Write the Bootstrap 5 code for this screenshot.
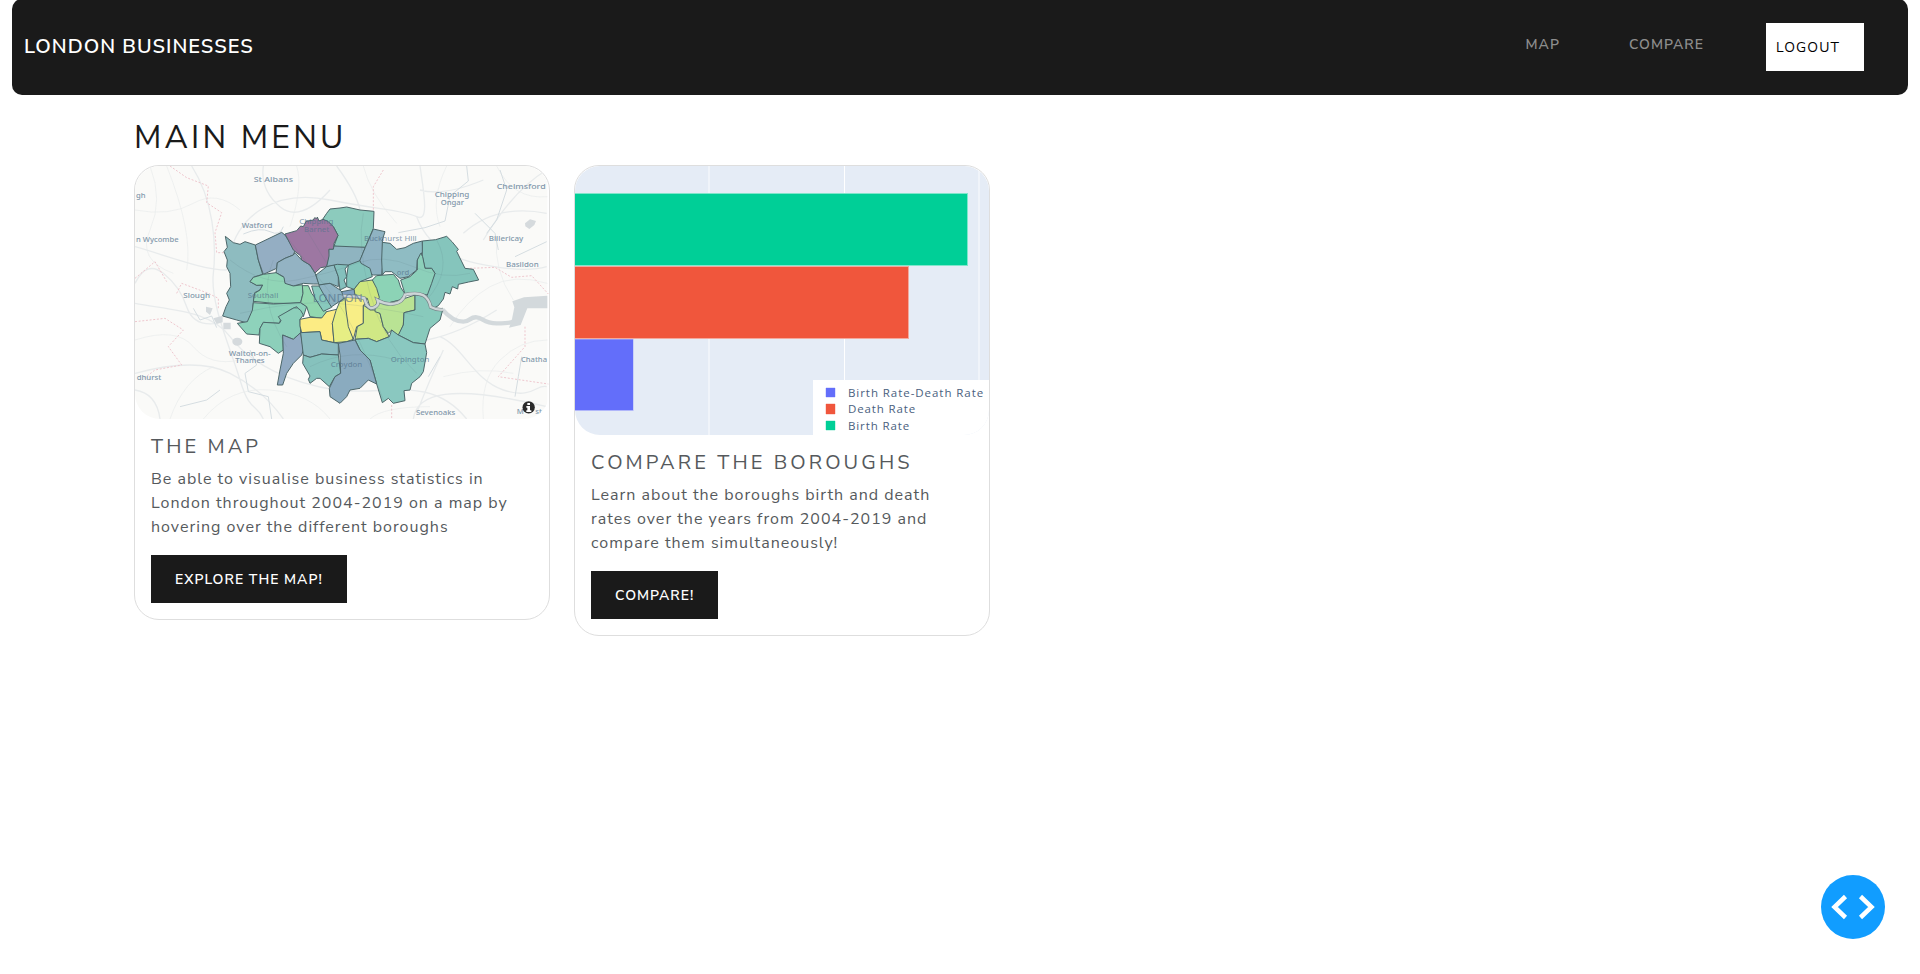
<!DOCTYPE html>
<html lang="en">
<head>
<meta charset="utf-8">
<meta name="viewport" content="width=device-width, initial-scale=1">
<title>London Businesses</title>
<link href="https://cdn.jsdelivr.net/npm/bootstrap@5.3.0/dist/css/bootstrap.min.css" rel="stylesheet">
<style>
  body { font-family: "Nunito Sans", "Nunito", "Open Sans", sans-serif; color: #1a1a1a; overflow: hidden; letter-spacing: 1px; }
  .site-nav { background: #1a1a1a; height: 96px; margin: -1px 12px 0; border-radius: 10px; padding: 0 44px 0 12px; }
  .site-nav .navbar-brand { font-size: 20px; font-weight: 600; color: #fff; letter-spacing: 1px; margin: 0; padding: 0; line-height: 30px; }
  .site-nav .nav-link { font-size: 14px; font-weight: 600; color: #8d8d8d; padding: 0 0 6px; line-height: 21px; letter-spacing: 1px; }
  .link-map { margin-right: 69px; } .link-compare { margin-right: 62px; }
  .btn-logout, .btn-logout:hover { width: 98px; height: 48px; background: #fff; color: #000; border: 0; border-radius: 0; padding: 0 10px; font-size: 14px; text-align: left; letter-spacing: 1.1px; }
  .page { width: 1894px; padding: 24px 24px 0 134px; }
  .page h1 { font-size: 32px; font-weight: 400; letter-spacing: 3.2px; line-height: 38px; margin-bottom: 8px; }
  .tile { border: 1px solid #dedede; border-radius: 25px; color: #55595c; }
  .tile .picture { display: block; width: 414px; border-radius: 25px; }
  .tile .card-body { padding: 16px; }
  .tile h2 { font-size: 20px; font-weight: 400; letter-spacing: 3.1px; line-height: 24px; margin-bottom: 8px; }
  .tile p { font-size: 16px; line-height: 24px; margin-bottom: 16px; white-space: nowrap; }
  .btn-ink { background: #1a1a1a; color: #fff; border-radius: 0; border: 0; font-size: 14px; font-weight: 600; height: 48px; padding: 0 24px; white-space: nowrap; letter-spacing: 1px; }
  .dev { position: fixed; right: 35px; bottom: 35px; width: 64px; height: 64px; border: 0; padding: 0; background: none; }
  .map-label { font-family: "Noto Sans", sans-serif; font-size: 23px; letter-spacing: 0; fill: #8298ab; font-weight: 500; }
  .map-label .capital { font-size: 34px; }
  .legend-text { font-family: "Open Sans", sans-serif; font-size: 11.5px; letter-spacing: .8px; fill: #4a617e; }
</style>
</head>
<body>
<nav class="navbar site-nav d-flex align-items-center flex-nowrap">
  <a class="navbar-brand me-auto" href="#">LONDON BUSINESSES</a>
  <a class="nav-link link-map" href="#">MAP</a>
  <a class="nav-link link-compare" href="#">COMPARE</a>
  <button class="btn btn-logout">LOGOUT</button>
</nav>
<main class="page">
  <h1>MAIN MENU</h1>
  <div class="row align-items-start">
    <div class="col-3">
      <div class="card tile">
        <svg class="picture" viewBox="15 18 1242 759" height="253">
          <rect x="15" y="18" width="1237" height="759" fill="#fafaf8"/>
          <g fill="none" stroke="#e8ebec" stroke-width="4">
            <path d="M185 18C250 120 260 250 250 340S300 560 330 660 380 730 400 777M15 260C120 290 220 330 290 330M15 430C120 450 240 450 300 530S480 670 620 690 900 640 1010 777M15 370Q50 300 100 340T170 440 260 490M290 330C310 150 450 90 600 120S820 150 860 170 880 90 870 18M400 18Q390 90 450 140T600 90M620 18Q680 100 690 150M860 170Q900 280 1040 310T1250 320M870 90Q940 110 1060 60M1000 220Q1100 130 1250 160M1060 240Q1150 90 1250 30M930 530C1000 560 1030 660 1120 690S1220 670 1250 680M850 777C860 700 960 670 1250 740M940 570Q890 680 860 760M15 690Q80 700 90 777M15 640Q200 590 300 640T460 777M890 540Q990 520 1100 450"/>
          </g>
          <g fill="none" stroke="#e9ecec" stroke-width="2">
            <path d="M15 150Q120 170 190 130T330 150M60 18Q100 120 60 210T130 340M110 18Q190 220 170 330M15 540Q140 500 190 560T330 600M120 777Q160 660 250 620M220 777Q300 680 420 690T600 777M700 18Q720 100 800 190M950 18Q900 120 930 200M1100 18Q1150 120 1252 110M1060 777Q1050 660 1110 600T1252 540M960 500Q1010 420 1080 380T1252 370M1100 230Q1090 330 1150 420M500 18Q520 80 480 200M940 650Q1050 620 1150 640M720 777Q760 740 900 740"/>
          </g>
          <g fill="none" stroke="#d5dde1" stroke-width="3">
            <path d="M340 222Q390 200 420 215T460 200M190 445l20 35 35-12 15 35M360 570l20 45-35 25 10 55 60 15 10 67M150 740l80-20 40-30M1010 18l5 45-55 45-15 75-60 20-80 15M1110 30l20 60-30 90-30 40M1035 160l60 60 10 50M1155 290l95-45M1175 590l-10 60-10 60M930 590l-35 60"/>
          </g>
          <g fill="none" stroke="#eec7ce" stroke-width="3" stroke-dasharray="6 5">
            <path d="M120 18l50 35 65 25-5 50 45 30-20 60 5 60 25 0M15 355l60-50 35 60M140 400l15-30 80 30 30 15v30M15 485l90-10 55 35-45 50 40 55-80 15-40 30M760 30l-30 50 0 90M1020 325l75-3 50 30 60-5 50 55M1185 500v60l-80 90 150 22M785 735v42"/>
          </g>
          <g fill="#d5dadd"><ellipse cx="322" cy="545" rx="15" ry="12"/><path d="M228 440l20 5-8 20-12-10ZM250 475l28-8v20l-18 5ZM280 488l22 0 0 20-22 0ZM1185 190l15-12 18 5-5 12-15 12-12-8Z"/></g>
          <path d="M937 448C960 475 980 485 1000 485S1020 470 1040 472 1060 490 1100 490 1155 490 1165 465" fill="none" stroke="#d3d9dc" stroke-width="13"/>
          <path d="M1145 482l8-40-6-18 35-12 70-5v38l-60 0-20 50-35 8Z" fill="#d3d9dc"/>
          <g stroke="#4c6669" stroke-width="3" stroke-linejoin="round">
            <path fill="#8ebcc0" d="M286 229l24 19 20 5 15-8 31 10 9 45 13 43-28 9-10 13 20 11 18-1-8 15-16 8-4 30-3 27-15 34-32-9-42-12 10-28 10-20-8-20 12-20-2-40-10-20 2-20-10-25 10-13Z"/>
            <path fill="#94aec3" d="M376 255l79-38 10 8 30 47-5 13-25 10-23 13-2 17-40 18-15-43Z"/>
            <path fill="#93b3c3" d="M440 325l2-17 23-13 25-10 5-7 20 22 25 15 15 24 12 33-17 0-30-2-30 8-25-6-5-22-22-12Z"/>
            <path fill="#8ccbbd" d="M578 178l12-18 10-13 30-3 20-3 40 9 42 4-2 51-24 57-66 1-28-5 12-32-14-26Z"/>
            <path fill="#9d77a2" d="M465 222l35-10 12-14 8 2 8-16 22-4 4-7 6 3 2-5 5 12 12-5 15 6 16 16 14 26-12 24-2 18-13 0 2 20-9 32-18 3-17 16-15-24-25-15-3-12-22-18Z"/>
            <path fill="#8fb4c0" d="M597 268l13 0 2-10 94 4-13 33-5 10-38 13-28-3-32 5 7-32Z"/>
            <path fill="#8fb3c3" d="M706 262l24-55 35 8-8 25 3 60-5 45-25 0-37-10-5-30Z"/>
            <path fill="#8fbcc3" d="M757 247l23 3 20 18 25-5 25-13 27-7 1 32-16 25-2 30-25 20-25 5-25-20-20 0-8 10-2-45Z"/>
            <path fill="#85c5bc" d="M877 243l40-4 33-10 16 16 19 23-5 6 25 51 25 3 16 32-30 6-31 7-2 14-16-7-7 22-15-5-5 20-15 20-15 8-18-25-2-20 25-60-10-15-20 0-8-35Z"/>
            <path fill="#8cd0ba" d="M872 280l6 10 7 35 20 0 10 15-10 30-13 35-32-7-35 4-13-42 28-10 22-20 0-30Z"/>
            <path fill="#8cd3b6" d="M727 360l13-13 50-4 15 17 7 22 13 20-15 18-40 10-25-12-10-28Z"/>
            <path fill="#84c5bc" d="M655 315l35-13 3 8 27 15 7 25-37 15-18 23-22-8 0-30Z"/>
            <path fill="#8ebac1" d="M558 345l32-25 22-5 13 35 0 30-25-10-33 5Z"/>
            <path fill="#84c0bc" d="M612 315l10-2 33 2-10 12 5 23-8 10 8 20-20 10-5-40Z"/>
            <path fill="#8fb4c3" d="M567 375l33-5 30 20 20 20-45 30-30-20Z"/>
            <path fill="#90d5b6" d="M360 365l10-13 30-9 38-5 24 14 3 18 25 8 27-4 2 26-7 28-30 2-52 0-60-6 4-24 16-10 8-15-18 1Z"/>
            <path fill="#8ed2bb" d="M370 428l60 4 82-4 18 12-10 30-20-30-20 10-25 20-7 20-48-3-10 18-3 20-37-3-28-32 30-5 15-34Z"/>
            <path fill="#8ccfba" d="M400 487l48 3 5-8-8-12 35-20q25-20 40 15l-10 13 2 40-22 20-32-13 2 45-15 10-25-20-32-10 2-45Z"/>
            <path fill="#92d7af" d="M517 377l18 0 10 23 30 40 15 15-12 20-38-5-10-30-18-12 7-28Z"/>
            <path fill="#88c9bd" d="M545 378l22 0 18 32 20 32-25 12-25-39Z"/>
            <path fill="#92abc3" d="M458 525l32 13 22-20 8 52-5 15-25 25-20 30-12 35-16 0 8-45 10-50Z"/>
            <path fill="#fcec84" d="M510 478l30-6 35 2 15-19 38-9-21 44 5 58-37-8-5-25-55 3-5-20Z"/>
            <path fill="#e6ee84" d="M618 452l10-24 17-16 5 38 10 50 10 38-20 7-38 3-5-58Z"/>
            <path fill="#f8ee86" d="M645 412l67 3-12 25 0 50-20 10-10 38-15-38-7-50Z"/>
            <path fill="#cfe77e" d="M672 388l18-23 37-5 13 25 8 27-13 28-15 2-8-27-37-5Z"/>
            <path fill="#d0e885" d="M700 435l20 15 15 0 15 10 10 40 18 30-38 15-25-10-40 3 7-38 18-10Z"/>
            <path fill="#b9e394" d="M735 440l15-15 20 5 40-10 45-15 0 45-33 8-2 37-15 35-20-20-10 10-15-20-10-40-15-5Z"/>
            <path fill="#88cabc" d="M855 405l35 5 20 35 28 5-8 30-30 25-15 47-35-4-45-23 15-30 2-37 33-8Z"/>
            <path fill="#8ac8c0" d="M675 538l40-3 25 10 38-15 7-20 20 15 45 23 35 4 5 26-10 57-10 15-25 20-5 20-18 2 3 30-35 8-15-15-18 13-17-56-20-72-30-30Z"/>
            <path fill="#8cbcc0" d="M512 518l58-3 5 25 37 8 13 2 0 35-50-3-35 10-20-7Z"/>
            <path fill="#86c2bd" d="M520 585l20 7 35-10 50 3 7 55-17 10-17 30-28-25-10 0-20 15-5-12 5-10-22-38Z"/>
            <path fill="#8aabbf" d="M625 550l50-10 15 30 30 30 20 72-25-12-25 25-30 5-10 20-20 20-30-20-2-25 17-35 17-10-2-55Z"/>
            <path fill="#7f9fc0" d="M635 395l37-7 3 17-35 5Z"/>
          </g>
          <g fill="none" stroke="#52767b" stroke-opacity=".13" stroke-width="3"><path d="M300 300Q400 380 500 360T680 310 850 320 1020 340M330 460Q500 420 620 430T880 470M470 230Q540 320 610 410T760 720M430 300Q380 420 470 560M700 160Q680 250 720 400T860 640M530 210L590 310M920 240Q970 330 890 420M540 620Q660 560 800 600"/></g>
          <path d="M638 408l45 2 20 5q10 35 28 28t12-22q25 14 50 10t32-27q38-8 55 2t22 35q20 10 37 8" fill="none" stroke="#7b8c8e" stroke-width="11"/>
          <path d="M638 408l45 2 20 5q10 35 28 28t12-22q25 14 50 10t32-27q38-8 55 2t22 35q20 10 37 8" fill="none" stroke="#ced5d7" stroke-width="7"/>
          <g class="map-label">
            <text x="371" y="65" textLength="118" lengthAdjust="spacingAndGlyphs">St Albans</text><text x="335" y="203" textLength="92" lengthAdjust="spacingAndGlyphs">Watford</text><text x="18" y="115">gh</text><text x="18" y="245" textLength="128" lengthAdjust="spacingAndGlyphs">n Wycombe</text><text x="160" y="415" textLength="80" lengthAdjust="spacingAndGlyphs">Slough</text><text x="296" y="587" textLength="126" lengthAdjust="spacingAndGlyphs">Walton-on-</text><text x="316" y="610" textLength="88" lengthAdjust="spacingAndGlyphs">Thames</text><text x="20" y="661" textLength="74" lengthAdjust="spacingAndGlyphs">dhurst</text>
            <text x="914" y="111" textLength="104" lengthAdjust="spacingAndGlyphs">Chipping</text><text x="932" y="134" textLength="70" lengthAdjust="spacingAndGlyphs">Ongar</text><text x="1100" y="86" textLength="147" lengthAdjust="spacingAndGlyphs">Chelmsford</text><text x="1076" y="242" textLength="104" lengthAdjust="spacingAndGlyphs">Billericay</text><text x="1128" y="320" textLength="98" lengthAdjust="spacingAndGlyphs">Basildon</text><text x="1173" y="607" textLength="78" lengthAdjust="spacingAndGlyphs">Chatha</text><text x="858" y="766" textLength="118" lengthAdjust="spacingAndGlyphs">Sevenoaks</text><text x="1160" y="761">M</text><text x="1216" y="761">st</text>
            <g fill="#53728b" fill-opacity=".65"><text x="508" y="193" textLength="102" lengthAdjust="spacingAndGlyphs">Chipping</text><text x="522" y="217" textLength="76" lengthAdjust="spacingAndGlyphs">Barnet</text><text x="702" y="244" textLength="158" lengthAdjust="spacingAndGlyphs">Buckhurst Hill</text><text x="353" y="415" textLength="92" lengthAdjust="spacingAndGlyphs">Southall</text><text x="800" y="345">ord</text><text class="capital" x="548" y="426" textLength="150" lengthAdjust="spacingAndGlyphs">LONDON</text><text x="602" y="621" textLength="95" lengthAdjust="spacingAndGlyphs">Croydon</text><text x="782" y="607" textLength="116" lengthAdjust="spacingAndGlyphs">Orpington</text></g>
          </g>
          <circle cx="1196" cy="742" r="18.500" fill="#2b2b2b"/><path d="M1192 729h8v6h-8ZM1189 738h11v13h4v5h-15v-5h3v-8h-3Z" fill="#fff"/>
        </svg>
        <div class="card-body">
          <h2>THE MAP</h2>
          <p>Be able to visualise business statistics in<br>London throughout 2004-2019 on a map by<br>hovering over the different boroughs</p>
          <button class="btn btn-ink">EXPLORE THE MAP!</button>
        </div>
      </div>
    </div>
    <div class="col-3">
      <div class="card tile">
        <svg class="picture" viewBox="0 0 414 269" height="269">
          <rect width="414" height="269" fill="#e5ecf6"/>
          <path d="M134 0V269M404 0V269" stroke="#f0f4fa" stroke-width="2"/><path d="M269.500 0V269" stroke="#fff"/>
          <path fill="#80e6cb" d="M0 27H393V100H0Z"/><path fill="#00cf97" d="M0 28H392V99H0Z"/>
          <path fill="#f3a99e" d="M0 100H334V173H0Z"/><path fill="#f0563c" d="M0 101H333V172H0Z"/>
          <path fill="#b0b6fa" d="M0 173H58.500V245H0Z"/><path fill="#636efa" d="M0 173.500H58V244H0Z"/>
          <rect x="238" y="214" width="176" height="55" fill="#fff"/>
          <g stroke-opacity=".4"><path fill="#636efa" stroke="#636efa" d="M251 222h9v9h-9Z"/><path fill="#f0563c" stroke="#f0563c" d="M251 238h9v10h-9Z"/><path fill="#00cf97" stroke="#00cf97" d="M251 255h9v9h-9Z"/></g>
          <g class="legend-text"><text x="273" y="230.500" textLength="136">Birth Rate-Death Rate</text><text x="273" y="247" textLength="68">Death Rate</text><text x="273" y="264" textLength="62">Birth Rate</text></g>
        </svg>
        <div class="card-body">
          <h2>COMPARE THE BOROUGHS</h2>
          <p>Learn about the boroughs birth and death<br>rates over the years from 2004-2019 and<br>compare them simultaneously!</p>
          <button class="btn btn-ink">COMPARE!</button>
        </div>
      </div>
    </div>
  </div>
</main>
<button class="dev" aria-label="Developer tools"><svg class="d-block" width="64" height="64" viewBox="0 0 64 64"><circle cx="32" cy="32" r="32" fill="#119dff"/><path d="M24.500 21.500L13.500 32l11 10.500M39.500 21.500l11 10.500-11 10.500" fill="none" stroke="#fff" stroke-width="4.500"/></svg></button>
<script src="https://cdn.jsdelivr.net/npm/bootstrap@5.3.0/dist/js/bootstrap.bundle.min.js"></script>
</body>
</html>
